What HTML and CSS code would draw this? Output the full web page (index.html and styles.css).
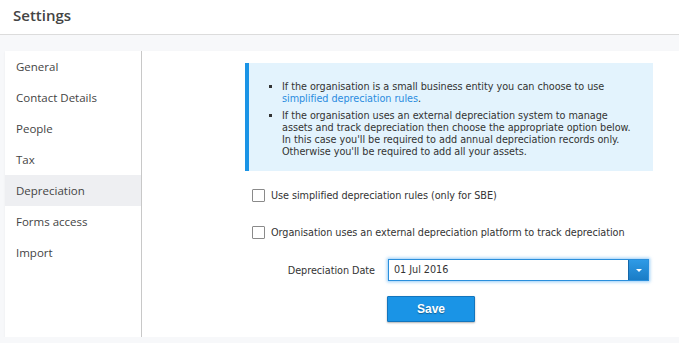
FILE: index.html
```html
<!DOCTYPE html>
<html lang="en">
<head>
    <meta charset="UTF-8">
    <title>Settings</title>
    <link rel="stylesheet" href="styles.css">
</head>
<body>
    <div class="page-header">
        <h1>Settings</h1>
    </div>

    <div class="page-body">
        <div class="card">
            <ul class="side-menu">
                <li>General</li>
                <li>Contact Details</li>
                <li>People</li>
                <li>Tax</li>
                <li class="active">Depreciation</li>
                <li>Forms access</li>
                <li>Import</li>
            </ul>

            <div class="content">
                <div class="info-box">
                    <ul>
                        <li>If the organisation is a small business entity you can choose to use <a href="#">simplified depreciation rules</a>.</li>
                        <li>If the organisation uses an external depreciation system to manage assets and track depreciation then choose the appropriate option below. In this case you'll be required to add annual depreciation records only. Otherwise you'll be required to add all your assets.</li>
                    </ul>
                </div>

                <label class="check-row">
                    <span class="checkbox"></span>
                    Use simplified depreciation rules (only for SBE)
                </label>

                <label class="check-row">
                    <span class="checkbox"></span>
                    Organisation uses an external depreciation platform to track depreciation
                </label>

                <div class="field-row">
                    <span class="field-label">Depreciation Date</span>
                    <div class="date-input">
                        <span class="date-value">01 Jul 2016</span>
                        <span class="date-btn"><span class="caret"></span></span>
                    </div>
                </div>

                <div class="actions">
                    <button class="save-btn">Save</button>
                </div>
            </div>
        </div>
    </div>
</body>
</html>
```

FILE: styles.css
```css
:root {
    --text-color: #444;
    --blue: #1a94e6;
    --blue-dark: #1375bd;
    --page-bg: #f7f8fa;
}

body {
    margin: 0;
    background: var(--page-bg);
    color: var(--text-color);
    font-family: 'Open Sans', sans-serif;
    overflow: hidden;
}

.page-header {
    background: #fff;
    height: 34px;
    border-bottom: 1px solid #dcdcdc;
}

.page-header h1 {
    margin: 0;
    padding: 4px 0 0 13px;
    font-size: 15px;
    font-weight: 600;
    color: #444;
    line-height: 22px;
}

.page-body {
    padding: 16px 0 0 5px;
}

.card {
    display: flex;
    background: #fff;
    height: 286px;
    box-shadow: 0 1px 2px rgba(0, 0, 0, 0.06);
}

.side-menu {
    list-style: none;
    margin: 0;
    padding: 0;
    width: 136px;
    border-right: 1px solid #c8c8c8;
}

.side-menu li {
    height: 31px;
    line-height: 32px;
    padding-left: 11px;
    font-size: 11.5px;
    color: #444;
}

.side-menu li.active {
    background: #eeeff2;
}

.content {
    flex: 1;
    padding: 12px 0 0 103px;
    font-family: 'DejaVu Sans', Verdana, sans-serif;
    font-size: 9.7px;
    letter-spacing: -0.05px;
    color: #333;
}

.info-box {
    width: 404px;
    background: #e3f3fd;
    border-left: 4px solid var(--blue);
    padding: 13px 0 13px 0;
}

.info-box ul {
    margin: 0;
    padding: 0 14px 0 33px;
    list-style: square;
    line-height: 12px;
}

.info-box li {
    margin-top: 5px;
}

.info-box a {
    color: #2b8ce0;
    text-decoration: none;
}

.check-row {
    display: flex;
    align-items: center;
    gap: 6px;
    margin: 18px 0 0 7px;
    height: 12px;
}

.check-row + .check-row {
    margin-top: 25px;
}

.checkbox {
    width: 11px;
    height: 11px;
    border: 1px solid #8a8a8a;
    border-radius: 1px;
    background: #fff;
}

.field-row {
    display: flex;
    align-items: center;
    margin-top: 21px;
}

.field-label {
    width: 130px;
    text-align: right;
    margin-right: 13px;
}

.date-input {
    display: flex;
    width: 259px;
    height: 20px;
    border: 1px solid #2a8fdc;
    box-shadow: 0 0 3px 1px rgba(80, 170, 240, 0.6);
    background: #fff;
}

.date-value {
    flex: 1;
    padding-left: 5px;
    line-height: 20px;
    color: #333;
}

.date-btn {
    width: 19px;
    background: linear-gradient(#2e9ae6, #1a7cc6);
    border-left: 1px solid #1567a8;
    display: flex;
    align-items: center;
    justify-content: center;
}

.caret {
    width: 0;
    height: 0;
    border-left: 3px solid transparent;
    border-right: 3px solid transparent;
    border-top: 3px solid #fff;
}

.actions {
    margin: 15px 0 0 142px;
}

.save-btn {
    width: 88px;
    height: 26px;
    background: var(--blue);
    color: #fff;
    border: 1px solid var(--blue-dark);
    border-radius: 1px;
    box-shadow: 0 1px 2px rgba(0, 0, 0, 0.3);
    font-family: 'Liberation Sans', Arial, sans-serif;
    font-weight: 700;
    font-size: 12px;
    text-shadow: 0 1px 1px rgba(0, 0, 0, 0.35);
    padding: 0;
    cursor: pointer;
}
```
